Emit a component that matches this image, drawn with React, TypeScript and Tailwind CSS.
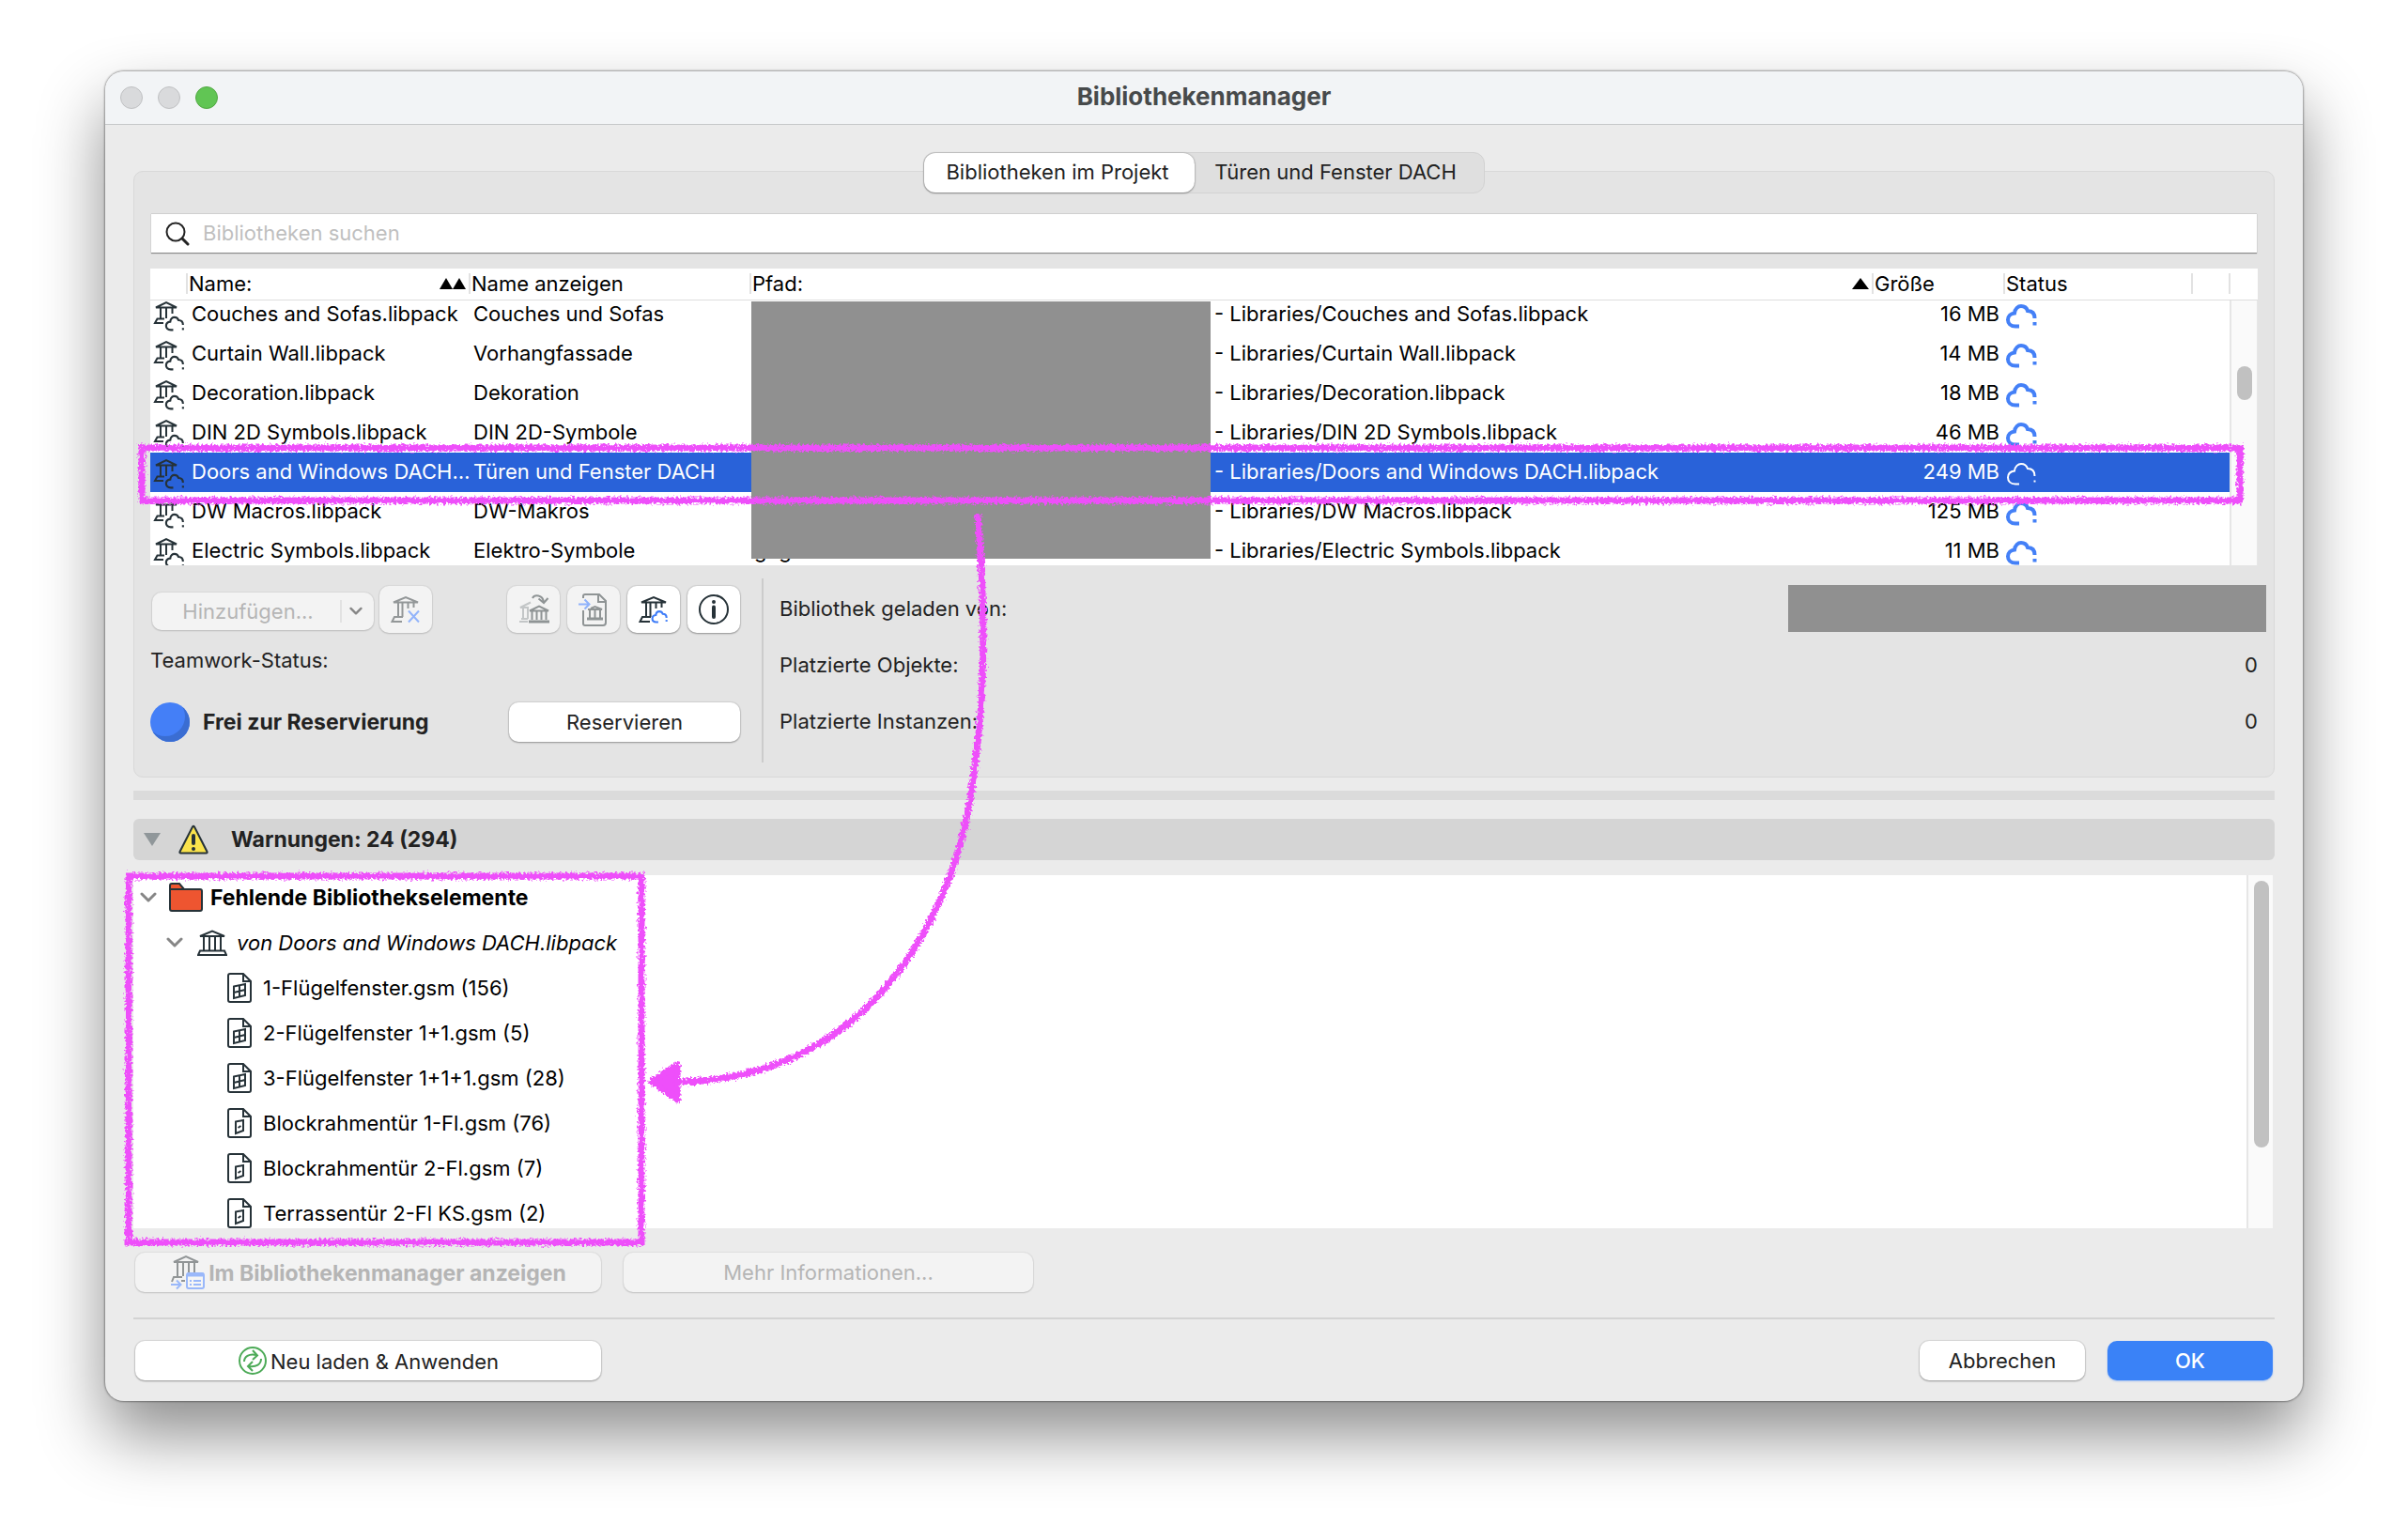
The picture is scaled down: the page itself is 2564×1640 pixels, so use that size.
import React, { useLayoutEffect, useRef, useState } from 'react';

interface Library {
  file: string;
  label: string;
  path: string;
  size: string;
  hidden?: string;
}

interface MissingElement {
  label: string;
  kind: 'window' | 'door';
}

const LIBRARIES: Library[] = [
  { file: 'Couches and Sofas.libpack', label: 'Couches und Sofas', path: '- Libraries/Couches and Sofas.libpack', size: '16 MB' },
  { file: 'Curtain Wall.libpack', label: 'Vorhangfassade', path: '- Libraries/Curtain Wall.libpack', size: '14 MB' },
  { file: 'Decoration.libpack', label: 'Dekoration', path: '- Libraries/Decoration.libpack', size: '18 MB' },
  { file: 'DIN 2D Symbols.libpack', label: 'DIN 2D-Symbole', path: '- Libraries/DIN 2D Symbols.libpack', size: '46 MB' },
  { file: 'Doors and Windows DACH…', label: 'Türen und Fenster DACH', path: '- Libraries/Doors and Windows DACH.libpack', size: '249 MB' },
  { file: 'DW Macros.libpack', label: 'DW-Makros', path: '- Libraries/DW Macros.libpack', size: '125 MB' },
  { file: 'Electric Symbols.libpack', label: 'Elektro-Symbole', path: '- Libraries/Electric Symbols.libpack', size: '11 MB', hidden: 'geg' },
];

const MISSING: MissingElement[] = [
  { label: '1-Flügelfenster.gsm (156)', kind: 'window' },
  { label: '2-Flügelfenster 1+1.gsm (5)', kind: 'window' },
  { label: '3-Flügelfenster 1+1+1.gsm (28)', kind: 'window' },
  { label: 'Blockrahmentür 1-Fl.gsm (76)', kind: 'door' },
  { label: 'Blockrahmentür 2-Fl.gsm (7)', kind: 'door' },
  { label: 'Terrassentür 2-Fl KS.gsm (2)', kind: 'door' },
];

const SELECTED = 4;

/* ---------- Icons ---------- */

const CLOUD = 'M15 24.5H11C5.5 24.5 3 21 3 17.5C3 13.5 6 11 10 10.5C10.5 5.5 14 3 17 3C20.5 3 23 5 24 8C29 8 31.5 11 31.5 16';

const CloudIcon: React.FC<{ selected?: boolean }> = ({ selected }) => (
  <svg width="34" height="28" viewBox="0 0 34 28" fill="none" stroke={selected ? '#ffffff' : '#4480f7'} strokeWidth={selected ? 2 : 4}>
    <path d={CLOUD} />
    <path d={selected ? 'M31.5 20.5v2' : 'M31.5 20v3.5'} />
  </svg>
);

const RowIcon: React.FC = () => (
  <svg width="34" height="34" viewBox="0 0 34 34" fill="none" stroke="#263238" strokeWidth="2">
    <path d="M3 7.5 14 2l11 5.5zM8 8v11M14 8v11M20.5 8v6" />
    <path d="M12 19.5H4.500L2 24H11" />
    <g transform="translate(12 16) scale(0.63)" strokeWidth="3.4">
      <path d={CLOUD} />
      <path d="M31.5 21v3.5" />
    </g>
  </svg>
);

const PartialBank: React.FC<{ color: string; children?: React.ReactNode }> = ({ color, children }) => (
  <svg width="32" height="32" viewBox="0 0 32 32" fill="none" stroke={color} strokeWidth="2">
    <path d="M3 8.500 16 3l13 5.500zM8 9v15M12.500 9v15M18.500 9v6M24.500 9v5" />
    <path d="M13 24H4L1.500 29H12" />
    {children}
  </svg>
);

const BankIcon: React.FC = () => (
  <svg width="32" height="28" viewBox="0 0 32 28" fill="none" stroke="#263238" strokeWidth="2">
    <path d="M3 7 16 1.500 29 7zM7 7v15M13 7v15M19 7v15M25 7v15" />
    <path d="M3 22.500h26l2 4.500H1z" />
  </svg>
);

const TransferIcon: React.FC = () => (
  <svg width="34" height="34" viewBox="0 0 34 34" fill="none" strokeWidth="2">
    <g stroke="#c3c6c7">
      <path d="M14 9.500 3 15h9M6 15v12M11 15v12M2 30h9M4 27h7" />
    </g>
    <g stroke="#8f9495">
      <path d="M16 5c2-4 11-4 12 4.500M22.500 5.500l5.500 4.500 4.500-5" />
      <path d="M13 18.500 23 13.500 33 18.500zM15.500 19v9M20.500 19v9M25.500 19v9M30.500 19v9" />
      <path d="M12 30h22" strokeWidth="3" />
    </g>
  </svg>
);

const ImportIcon: React.FC = () => (
  <svg width="34" height="36" viewBox="0 0 34 36" fill="none" strokeWidth="2">
    <path stroke="#8f9495" d="M6 6V4q0-2 2-2H23l7 7v23q0 3-3 3H8q-2 0-2-2V19M22 2v8h8" />
    <path stroke="#8f9495" d="M14 17 18.500 15 26 18H11M13 19v8M18.500 19v8M24 19v8" />
    <path stroke="#8f9495" strokeWidth="3" d="M10 28h17" />
    <path stroke="#8fb2fb" d="M1 12.500h11M7.500 7.500l5 5-5 5" />
  </svg>
);

const InfoIcon: React.FC = () => (
  <svg width="34" height="34" viewBox="0 0 34 34" fill="none" stroke="#263238">
    <circle cx="17" cy="17" r="15" strokeWidth="2" />
    <path d="M17 14.500v10.500" strokeWidth="4" strokeLinecap="round" />
    <circle cx="17" cy="9" r="2" fill="#263238" stroke="none" />
  </svg>
);

const ShowInManagerIcon: React.FC = () => (
  <svg width="38" height="38" viewBox="0 0 38 38" fill="none" strokeWidth="2">
    <path stroke="#919596" d="M4 8 17 2l13 6zM8 8v15M14 8v15M20 8v11M26 8v11M13 24H4l-2 5M12 28h4" />
    <rect x="18" y="20" width="18" height="16" rx="2" stroke="#9ab8fa" fill="#f5f5f5" />
    <path stroke="#9ab8fa" d="M18 21.500h18" strokeWidth="4" />
    <path stroke="#9ab8fa" d="M21 28h2M25 28h8M21 32h2M25 32h8M1 32h10M7 27.500l4.500 4.500-4.500 4.500" />
  </svg>
);

const ReloadIcon: React.FC = () => (
  <svg width="32" height="32" viewBox="0 0 32 32" fill="none" stroke="#4caa57" strokeWidth="2">
    <circle cx="16" cy="16" r="14" />
    <path d="M7 17c0-5 5-9 13-7M16 5l5 5.500-5 4.500M25 14c0 6-5 9-13 8M16 17l-5 5 5 5" />
  </svg>
);

const FileIcon: React.FC<{ kind: MissingElement['kind'] }> = ({ kind }) => (
  <svg width="28" height="34" viewBox="0 0 28 34" fill="none" stroke="#263238" strokeWidth="2">
    <path d="M4 2H18l8 8v20q0 2-2 2H4q-2 0-2-2V4q0-2 2-2zM18 2v8h8" />
    {kind === 'window' ? (
      <path d="M8 15.500 20 13v12L8 28zM14 14v13M8 22l12-3" />
    ) : (
      <path d="M10 15.500 18 14v11L10 28zM12.500 22l3-2" />
    )}
  </svg>
);

const FolderIcon: React.FC = () => (
  <svg width="36" height="32" viewBox="0 0 36 32" fill="#ee5530" stroke="#263238" strokeWidth="2">
    <path d="M1 28V3q0-2 2-2h8l5 6H33q2 0 2 2v19q0 2-2 2H3q-2 0-2-2z" />
    <path d="M1 7h15" />
  </svg>
);

const WarningIcon: React.FC = () => (
  <svg width="32" height="32" viewBox="0 0 32 32">
    <path d="M15 2.500q1-1.500 2 0L30.500 29q.5 1.500-1 1.500h-27q-1.500 0-1-1.500z" fill="#fae34c" stroke="#263238" strokeWidth="2" />
    <path d="M16 12v8" stroke="#263238" strokeWidth="4" strokeLinecap="round" />
    <circle cx="16" cy="26" r="2" fill="#263238" />
  </svg>
);

const Chevron: React.FC<{ width?: number }> = ({ width = 18 }) => (
  <svg width={width} height="12" viewBox="0 0 18 12" fill="none" stroke="#868686" strokeWidth="3" strokeLinecap="round" strokeLinejoin="round">
    <path d="M2 2l7 7 7-7" />
  </svg>
);

const SortArrow: React.FC<{ width: number }> = ({ width }) => (
  <svg width={width} height="12" viewBox="0 0 16 12" preserveAspectRatio="none">
    <path d="M8 0 16 12H0z" fill="#000" />
  </svg>
);

/* ---------- Controls ---------- */

const BUTTON = 'flex items-center justify-center rounded-[10px] whitespace-nowrap';
const ENABLED = 'bg-white shadow-[0_0_1px_1px_rgba(0,0,0,0.08),0_1px_2px_rgba(0,0,0,0.3)]';
const DISABLED = 'bg-[#f3f3f3] text-[#b5b5b5] shadow-[0_0_1px_1px_rgba(0,0,0,0.05),0_1px_2px_rgba(0,0,0,0.14)]';

const ToolButton: React.FC<{ label: string; disabled?: boolean; children: React.ReactNode }> = ({ label, disabled, children }) => (
  <button aria-label={label} disabled={disabled} className={`${BUTTON} w-14 h-[50px] ${disabled ? DISABLED : ENABLED}`}>
    {children}
  </button>
);

const HeadCell: React.FC<{ children?: React.ReactNode }> = ({ children }) => (
  <th className="sticky top-0 z-10 h-[34px] p-0 pb-[2px] bg-white border-b border-[#dedede] font-normal text-left">
    <div className="flex items-center justify-between h-[22px] pl-px pr-[3px] border-r-2 border-[#e2e2e2]">{children}</div>
  </th>
);

const LibraryTable: React.FC = () => {
  const scroller = useRef<HTMLDivElement>(null);

  useLayoutEffect(() => {
    if (scroller.current) scroller.current.scrollTop = 6;
  }, []);

  return (
    <div className="relative mt-[17px]">
      <div ref={scroller} className="h-[316px] overflow-hidden bg-white text-black">
        <table className="w-full table-fixed border-separate border-spacing-0">
          <colgroup>
            <col className="w-10" />
            <col className="w-[301px]" />
            <col className="w-[299px]" />
            <col />
            <col className="w-[140px]" />
            <col className="w-[200px]" />
            <col className="w-10" />
            <col className="w-[29px]" />
          </colgroup>
          <thead>
            <tr>
              <HeadCell />
              <HeadCell>
                <span>Name:</span>
                <span className="flex"><SortArrow width={14} /><SortArrow width={14} /></span>
              </HeadCell>
              <HeadCell>Name anzeigen</HeadCell>
              <HeadCell>
                <span>Pfad:</span>
                <SortArrow width={18} />
              </HeadCell>
              <HeadCell>Größe</HeadCell>
              <HeadCell>Status</HeadCell>
              <HeadCell />
              <th className="sticky top-0 z-10 h-[34px] p-0 bg-white border-b border-[#dedede]"></th>
            </tr>
          </thead>
          <tbody>
            {LIBRARIES.map((lib, i) => {
              const selected = i === SELECTED;
              const cell = selected ? 'h-[42px] p-0 pb-[2px] bg-[#2962d9] text-white' : 'h-[42px] p-0 pb-[2px]';
              return (
                <tr key={lib.file} className="whitespace-nowrap">
                  <td className={cell}><div className="pl-[3px] pt-1.5"><RowIcon /></div></td>
                  <td className={cell}><div className="pl-1">{lib.file}</div></td>
                  <td className={cell}><div className="pl-[3px]">{lib.label}</div></td>
                  <td className={cell}>
                    <div className="flex">
                      <span className="w-[493px] pl-[3px]">{lib.hidden}</span>
                      <span>{lib.path}</span>
                    </div>
                  </td>
                  <td className={`${cell} text-right`}><div className="pr-1.5">{lib.size}</div></td>
                  <td className={cell}><div className="pt-1.5"><CloudIcon selected={selected} /></div></td>
                  <td className={cell}></td>
                  <td className="p-0"></td>
                </tr>
              );
            })}
          </tbody>
        </table>
      </div>
      <div className="absolute right-0 top-[34px] bottom-0 w-[30px] bg-[#fafafa] border-l-2 border-r border-[#e6e6e6]">
        <div className="absolute left-[6px] top-[70px] w-4 h-9 rounded-full bg-[#c1c1c1]"></div>
      </div>
      <div className="absolute left-[640px] top-[35px] w-[489px] h-[274px] bg-[#909090]"></div>
    </div>
  );
};

/* Hand-drawn marker over the dialog */
const Annotations: React.FC = () => (
  <svg className="absolute inset-0 w-full h-full pointer-events-none" fill="none" stroke="#ee4ffa" strokeWidth="7">
    <defs>
      <filter id="chalk" filterUnits="userSpaceOnUse" x="0" y="0" width="100%" height="100%">
        <feTurbulence type="fractalNoise" baseFrequency="0.4" numOctaves="2" seed="4" result="noise" />
        <feDisplacementMap in="SourceGraphic" in2="noise" scale="8" xChannelSelector="R" yChannelSelector="G" />
      </filter>
    </defs>
    <g filter="url(#chalk)">
      <rect x="151" y="477" width="2234" height="56" />
      <rect x="137" y="933" width="546" height="390" />
      <path d="M1041 548C1049 640 1050 735 1037 823C1022 965 932 1150 722 1152" />
      <path d="M694 1152 721 1134V1171z" fill="#ee4ffa" strokeLinejoin="round" />
    </g>
  </svg>
);

export default function App() {
  const [query, setQuery] = useState('');

  return (
    <div className="relative min-h-screen bg-white px-28 pt-[76px] pb-[148px] font-['Inter',sans-serif] text-[22px] leading-7 text-[#222222]">
      <main className="rounded-[20px] bg-[#ebebeb] shadow-[0_0_2px_1px_rgba(0,0,0,0.35),0_36px_70px_rgba(0,0,0,0.45)]">
        {/* Title bar */}
        <header className="relative flex items-center justify-center h-[57px] rounded-t-[20px] bg-[#f2f4f6] border-b border-[#c6c8c9]">
          <div className="absolute left-4 flex gap-4">
            <span className="w-6 h-6 rounded-full bg-[#d9dadc] border border-[#c0c1c3]"></span>
            <span className="w-6 h-6 rounded-full bg-[#d9dadc] border border-[#c0c1c3]"></span>
            <span className="w-6 h-6 rounded-full bg-[#61c554] border border-[#52a843]"></span>
          </div>
          <h1 className="pb-[2px] text-[26px] font-bold text-[#474a4b]">Bibliothekenmanager</h1>
        </header>

        <div className="px-[30px] pt-[29px] pb-[22px]">
          {/* Tabs */}
          <div role="tablist" className="relative z-10 flex w-fit h-11 mx-auto rounded-xl bg-[#dfdfdf] border border-[#d2d2d2]">
            <button role="tab" aria-selected="true" className="w-[288px] pb-[2px] pr-1 rounded-xl bg-white shadow-[0_0_2px_rgba(0,0,0,0.3),0_1px_2px_rgba(0,0,0,0.3)]">
              Bibliotheken im Projekt
            </button>
            <button role="tab" aria-selected="false" className="w-[308px] pb-[2px] pr-2">Türen und Fenster DACH</button>
          </div>

          {/* Project libraries */}
          <section className="-mt-6 px-[17px] pt-11 pb-[15px] rounded-[10px] bg-[#e4e4e4] border border-[#d8d8d8]">
            <label className="flex items-center gap-[14px] h-[42px] mx-px pl-[15px] bg-white border-t border-[#cfcfcf] shadow-[0_1px_1px_rgba(0,0,0,0.4)]">
              <svg width="26" height="26" viewBox="0 0 26 26" fill="none" stroke="#222" strokeLinecap="round">
                <circle cx="11" cy="11" r="9.500" strokeWidth="2" />
                <path d="M18 18l6 6" strokeWidth="3" />
              </svg>
              <input
                aria-label="Bibliotheken suchen"
                placeholder="Bibliotheken suchen"
                value={query}
                onChange={(e) => setQuery(e.target.value)}
                className="flex-1 pb-[2px] outline-none placeholder:text-[#bfbfbf]"
              />
            </label>

            <LibraryTable />

            <div className="flex mt-[14px]">
              <div className="w-[653px] pt-2 pb-[22px] pr-[23px] border-r-2 border-[#cccccc]">
                <div className="flex items-center gap-2">
                  <div className={`${BUTTON} ${DISABLED} w-[236px] h-10 mt-1 ml-[2px] mr-[-2px]`}>
                    <button disabled className="flex-1 pl-1 text-center">Hinzufügen...</button>
                    <button disabled aria-label="Quelle wählen" className="flex items-center justify-center w-9 h-6 pr-1 border-l-2 border-[#e2e2e2]">
                      <Chevron width={14} />
                    </button>
                  </div>
                  <ToolButton label="Bibliothek entfernen" disabled>
                    <PartialBank color="#939798"><path stroke="#93b4fa" d="M19 17.500l11 12M30 17.500l-11 12" /></PartialBank>
                  </ToolButton>
                  <div className="flex gap-2 ml-auto">
                    <ToolButton label="Bibliothek ersetzen" disabled><TransferIcon /></ToolButton>
                    <ToolButton label="Bibliothek einbetten" disabled><ImportIcon /></ToolButton>
                    <ToolButton label="Cloud-Bibliothek">
                      <PartialBank color="#263238">
                        <g transform="translate(13 16.5) scale(0.53)" stroke="#3f7df8" strokeWidth="4">
                          <path d={CLOUD} />
                          <path d="M31.500 20v3.500" />
                        </g>
                      </PartialBank>
                    </ToolButton>
                    <ToolButton label="Information"><InfoIcon /></ToolButton>
                  </div>
                </div>
                <p className="mt-[15px]">Teamwork-Status:</p>
                <div className="flex items-center mt-[31px]">
                  <span className="w-[42px] h-[42px] rounded-full bg-[#447ff7] shadow-[inset_-5px_-6px_0_#3a6dd2]"></span>
                  <strong className="ml-[14px] text-[23px]">Frei zur Reservierung</strong>
                  <button className={`${BUTTON} ${ENABLED} w-[246px] h-[42px] ml-auto`}>Reservieren</button>
                </div>
              </div>
              <dl className="flex-1 pl-[17px] pt-[2px]">
                <div className="flex items-center justify-between h-[60px] -mr-[9px]">
                  <dt>Bibliothek geladen von:</dt>
                  <dd className="w-[509px] h-[50px] bg-[#909090]"></dd>
                </div>
                <div className="flex items-center justify-between h-[60px]">
                  <dt>Platzierte Objekte:</dt>
                  <dd>0</dd>
                </div>
                <div className="flex items-center justify-between h-[60px]">
                  <dt>Platzierte Instanzen:</dt>
                  <dd>0</dd>
                </div>
              </dl>
            </div>
          </section>

          <div className="h-[10px] mt-[14px] bg-[#dbdbdb]"></div>

          {/* Warnings */}
          <button className="flex items-center w-full h-11 mt-5 pl-[11px] rounded-md bg-[#d5d5d5] text-[23px] font-bold">
            <svg width="18" height="14" viewBox="0 0 18 14"><path d="M0 0H18L9 14z" fill="#90979a" /></svg>
            <span className="ml-[19px]"><WarningIcon /></span>
            <span className="ml-6">Warnungen: 24 (294)</span>
          </button>

          <div className="relative h-[376px] mt-4 mr-[2px] overflow-hidden bg-white text-black">
            <ul>
              <li>
                <div className="flex items-center h-12 pl-[7px]">
                  <Chevron />
                  <span className="ml-[13px]"><FolderIcon /></span>
                  <strong className="ml-2 text-[23px]">Fehlende Bibliothekselemente</strong>
                </div>
                <ul>
                  <li>
                    <div className="flex items-center h-12 pl-[35px]">
                      <Chevron />
                      <span className="ml-[15px]"><BankIcon /></span>
                      <em className="ml-[10px]">von Doors and Windows DACH.libpack</em>
                    </div>
                    <ul>
                      {MISSING.map((item) => (
                        <li key={item.label} className="flex items-center h-12 pl-[99px]">
                          <FileIcon kind={item.kind} />
                          <span className="ml-[11px]">{item.label}</span>
                        </li>
                      ))}
                    </ul>
                  </li>
                </ul>
              </li>
            </ul>
            <div className="absolute right-0 inset-y-0 w-7 bg-[#fafafa] border-l-2 border-[#e6e6e6]">
              <div className="absolute left-[6px] top-[6px] w-4 h-[284px] rounded-full bg-[#c1c1c1]"></div>
            </div>
          </div>

          <div className="flex gap-6 mt-[26px] pl-[2px]">
            <button disabled className={`${BUTTON} ${DISABLED} w-[496px] h-[42px] text-[23px] font-bold`}>
              <ShowInManagerIcon />
              <span className="ml-[3px] pt-[2px]">Im Bibliothekenmanager anzeigen</span>
            </button>
            <button disabled className={`${BUTTON} ${DISABLED} w-[436px] h-[42px]`}>Mehr Informationen...</button>
          </div>

          <hr className="mt-[27px] border-t-2 border-[#d3d3d3]" />

          {/* Dialog actions */}
          <footer className="flex mt-[23px] px-[2px]">
            <button className={`${BUTTON} ${ENABLED} w-[496px] h-[42px]`}>
              <ReloadIcon />
              <span className="ml-[3px] pt-[2px]">Neu laden &amp; Anwenden</span>
            </button>
            <button className={`${BUTTON} ${ENABLED} w-44 h-[42px] ml-auto`}>Abbrechen</button>
            <button className={`${BUTTON} w-44 h-[42px] ml-6 bg-[#3a82f7] text-white font-medium shadow-[0_1px_2px_rgba(58,130,247,0.4)]`}>OK</button>
          </footer>
        </div>
      </main>

      <Annotations />
    </div>
  );
}
